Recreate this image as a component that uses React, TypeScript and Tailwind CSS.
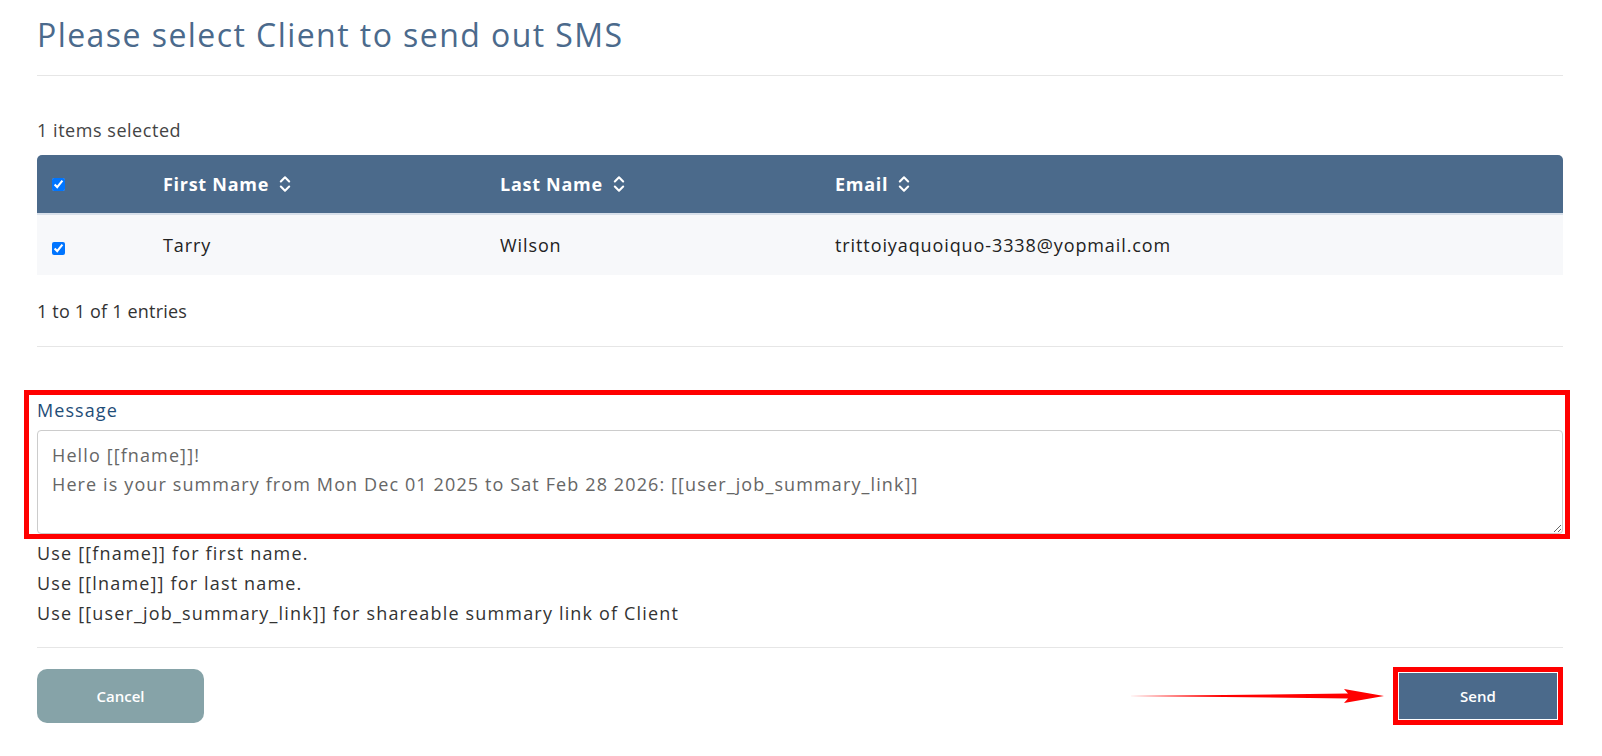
import { ChevronsUpDown } from 'lucide-react';

const clients = [
  { first: 'Tarry', last: 'Wilson', email: 'trittoiyaquoiquo-3338@yopmail.com' },
];

const headers = ['First Name', 'Last Name', 'Email'];

const hints = [
  'Use [[fname]] for first name.',
  'Use [[lname]] for last name.',
  'Use [[user_job_summary_link]] for shareable summary link of Client',
];

const message =
  'Hello [[fname]]!\nHere is your summary from Mon Dec 01 2025 to Sat Feb 28 2026: [[user_job_summary_link]]';

function SortHeader({ label }: { label: string }) {
  return (
    <div className="flex items-center gap-[6px]">
      <span>{label}</span>
      <ChevronsUpDown size={20} strokeWidth={2.5} />
    </div>
  );
}

export default function App() {
  return (
    <div
      className="min-h-screen bg-white pl-[37px] pr-[39px] pt-[15px] text-[18px] tracking-[0.05em] text-[#333]"
      style={{ fontFamily: '"Open Sans", Lato, sans-serif' }}
    >
      <h1 className="text-[32px] leading-[40px] tracking-[0.045em] text-[#4b6a8c]">
        Please select Client to send out SMS
      </h1>
      <div className="mt-[20px] h-px bg-[#e6e6e6]" />

      <p className="mt-[42px] leading-[24px] tracking-[0.03em] text-[#444]">1 items selected</p>

      <div className="mt-[13px] overflow-hidden rounded-t-[5px]">
        <div className="grid h-[60px] grid-cols-[126px_337px_335px_1fr] items-center border-b-[2px] border-[#d8e0ea] bg-[#4b6a8b] font-bold tracking-[0.04em] text-white">
          <div className="pl-[15px]">
            <input type="checkbox" defaultChecked className="block h-[13px] w-[13px]" />
          </div>
          {headers.map((h) => (
            <SortHeader key={h} label={h} />
          ))}
        </div>
        {clients.map((c) => (
          <div
            key={c.email}
            className="grid h-[60px] grid-cols-[126px_337px_335px_1fr] items-center bg-[#f7f8fa] text-[#222]"
          >
            <div className="pl-[15px] pt-[6px]">
              <input type="checkbox" defaultChecked className="block h-[13px] w-[13px]" />
            </div>
            <span>{c.first}</span>
            <span>{c.last}</span>
            <span className="tracking-[0.05em]">{c.email}</span>
          </div>
        ))}
      </div>

      <p className="mt-[24px] leading-[24px] tracking-[0.01em] text-[#333]">1 to 1 of 1 entries</p>
      <div className="mt-[23px] h-px bg-[#e6e6e6]" />

      <div className="relative mt-[51px]">
        <label className="block leading-[24px] font-medium tracking-[0.06em] text-[#1f4d78]">Message</label>
        <textarea
          defaultValue={message}
          className="mt-[8px] block h-[104px] w-full rounded-[4px] border border-[#cccccc] px-[14px] py-[10px] leading-[29px] tracking-[0.062em] text-[#666] outline-none"
        />
        <div className="pointer-events-none absolute -top-[8px] -right-[7px] -bottom-[5px] -left-[13px] border-[5px] border-[#ff0000]" />
      </div>

      <div className="mt-[4px] leading-[30px] tracking-[0.065em] text-[#333]">
        {hints.map((h) => (
          <p key={h}>{h}</p>
        ))}
      </div>

      <div className="mt-[19px] h-px bg-[#e6e6e6]" />

      <div className="mt-[19px] flex items-center justify-between tracking-normal">
        <button className="h-[54px] w-[167px] rounded-[10px] bg-[#86a3a8] text-[15px] font-semibold text-white">
          Cancel
        </button>
        <div className="flex items-center gap-[9px]">
          <svg width="256" height="14" viewBox="0 0 256 14">
            <polygon
              points="0,7 220,4.6 216,0 256,7 216,14 220,9.4"
              fill="#ff0000"
            />
          </svg>
          <div className="border-[5px] border-[#ff0000] p-px">
            <button className="block h-[46px] w-[158px] bg-[#4b6a8b] text-[15px] font-semibold text-white">
              Send
            </button>
          </div>
        </div>
      </div>
    </div>
  );
}
